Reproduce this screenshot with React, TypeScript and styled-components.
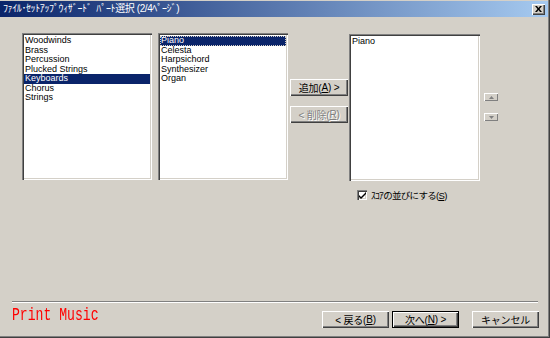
import React from "react";
import styled, { createGlobalStyle } from "styled-components";

const GlobalStyle = createGlobalStyle`
  html, body {
    margin: 0;
    padding: 0;
    background: #d4d0c8;
    overflow: hidden;
  }
`;

const jp = `"Liberation Sans", "Noto Sans CJK JP", sans-serif`;

const families = ["Woodwinds", "Brass", "Percussion", "Plucked Strings", "Keyboards", "Chorus", "Strings"];
const instruments = ["Piano", "Celesta", "Harpsichord", "Synthesizer", "Organ"];

const App = () => {
  return (
    <Window>
      <GlobalStyle />
      <TitleBar>
        <Title>ﾌｧｲﾙ･ｾｯﾄｱｯﾌﾟｳｨｻﾞｰﾄﾞ  ﾊﾟｰﾄ選択 (2/4ﾍﾟｰｼﾞ)</Title>
        <CloseButton>
          <svg width="7" height="6" viewBox="0 0 7 6">
            <path d="M0 0h2l1.5 2L5 0h2L4.5 3 7 6H5L3.5 4 2 6H0l2.5-3z" fill="#000" />
          </svg>
        </CloseButton>
      </TitleBar>

      <Main>
        <ListBox>
          {families.map((f) => (
            <Item key={f} $selected={f === "Keyboards"}>
              {f}
            </Item>
          ))}
        </ListBox>
        <ListBox $ml={6}>
          {instruments.map((f) => (
            <Item key={f} $selected={f === "Piano"} $focus={f === "Piano"}>
              {f}
            </Item>
          ))}
        </ListBox>
        <ButtonColumn>
          <Button>
            追加(<U>A</U>) &gt;
          </Button>
          <Button $disabled>
            &lt; 削除(<U>R</U>)
          </Button>
        </ButtonColumn>
        <RightColumn>
          <ListBox $w={131}>
            <Item>Piano</Item>
          </ListBox>
          <CheckRow>
            <CheckBox>
              <svg width="7" height="7" viewBox="0 0 7 7">
                <path d="M0 3l2 2 5-5v2L2 7 0 5z" fill="#000" />
              </svg>
            </CheckBox>
            <CheckLabel>
              ｽｺｱの並びにする(<U>S</U>)
            </CheckLabel>
          </CheckRow>
        </RightColumn>
        <ArrowColumn>
          <ArrowButton>
            <svg width="5" height="3" viewBox="0 0 5 3">
              <path d="M2.5 0L5 3H0z" fill="#808080" />
            </svg>
          </ArrowButton>
          <ArrowButton>
            <svg width="5" height="3" viewBox="0 0 5 3">
              <path d="M0 0h5L2.5 3z" fill="#808080" />
            </svg>
          </ArrowButton>
        </ArrowColumn>
      </Main>

      <Spacer />
      <Separator />
      <Footer>
        <Logo>Print Music</Logo>
        <ButtonGroup>
          <Button $w={67}>
            &lt; 戻る(<U>B</U>)
          </Button>
          <Button $w={67} $default>
            次へ(<U>N</U>) &gt;
          </Button>
          <Button $w={67} $ml={10}>
            キャンセル
          </Button>
        </ButtonGroup>
      </Footer>
    </Window>
  );
};

export default App;

const Window = styled.div`
  display: flex;
  flex-direction: column;
  width: 550px;
  height: 338px;
  box-sizing: border-box;
  background: #d4d0c8;
  border-right: 1px solid #404040;
  border-bottom: 1px solid #404040;
  box-shadow: inset -1px -1px #808080;
  overflow: hidden;
`;

const TitleBar = styled.div`
  display: flex;
  align-items: center;
  justify-content: space-between;
  height: 16px;
  margin: 1px 1px 0 0;
  padding: 0 3px 0 3px;
  background: linear-gradient(to right, #0a246a, #a6caf0);
`;

const Title = styled.span`
  color: #fff;
  font-family: ${jp};
  font-size: 10px;
  letter-spacing: -0.4px;
  line-height: 16px;
  white-space: pre;
`;

const CloseButton = styled.div`
  display: flex;
  align-items: center;
  justify-content: center;
  width: 13px;
  height: 11px;
  background: #d4d0c8;
  box-shadow: inset 1px 1px #fff, inset -1px -1px #404040, inset -2px -2px #808080;
`;

const Main = styled.div`
  display: flex;
  align-items: flex-start;
  margin-top: 16px;
  padding-left: 22px;
`;

const ListBox = styled.div<{ $w?: number; $ml?: number }>`
  width: ${(p) => p.$w ?? 130}px;
  height: 147px;
  margin-left: ${(p) => p.$ml ?? 0}px;
  box-sizing: border-box;
  padding: 3px 2px;
  background: #fff;
  box-shadow: inset 1px 1px #808080, inset 2px 2px #404040, inset -1px -1px #fff,
    inset -2px -2px #d4d0c8;
`;

const Item = styled.div<{ $selected?: boolean; $focus?: boolean }>`
  height: 9.5px;
  padding-left: 1px;
  font-family: "Liberation Sans", Arial, sans-serif;
  font-size: 9px;
  line-height: 9.5px;
  white-space: nowrap;
  color: ${(p) => (p.$selected ? "#fff" : "#000")};
  background: ${(p) => (p.$selected ? "#0a246a" : "transparent")};
  outline: ${(p) => (p.$focus ? "1px dotted #d4d0c8" : "none")};
  outline-offset: -1px;
`;

const ButtonColumn = styled.div`
  display: flex;
  flex-direction: column;
  gap: 10px;
  margin-left: 2px;
  padding-top: 46px;
`;

const Button = styled.div<{ $w?: number; $ml?: number; $disabled?: boolean; $default?: boolean }>`
  display: flex;
  align-items: center;
  justify-content: center;
  width: ${(p) => p.$w ?? 58}px;
  height: 17px;
  margin-left: ${(p) => p.$ml ?? 0}px;
  box-sizing: border-box;
  font-family: ${jp};
  font-size: 10px;
  letter-spacing: -0.2px;
  white-space: nowrap;
  color: ${(p) => (p.$disabled ? "#808080" : "#000")};
  text-shadow: ${(p) => (p.$disabled ? "1px 1px #fff" : "none")};
  background: #d4d0c8;
  box-shadow: ${(p) =>
    p.$default
      ? "inset 0 0 0 1px #000, inset 1px 1px #000, inset 2px 2px #fff, inset -2px -2px #404040, inset -3px -3px #808080"
      : "inset 1px 1px #fff, inset -1px -1px #404040, inset -2px -2px #808080"};
`;

const U = styled.span`
  text-decoration: underline;
`;

const RightColumn = styled.div`
  display: flex;
  flex-direction: column;
  margin-left: 1px;
  margin-top: 1px;
`;

const CheckRow = styled.div`
  display: flex;
  align-items: center;
  gap: 4px;
  margin-top: 7px;
  padding-left: 8px;
`;

const CheckBox = styled.div`
  display: flex;
  align-items: center;
  justify-content: center;
  width: 10px;
  height: 10px;
  box-sizing: border-box;
  background: #fff;
  box-shadow: inset 1px 1px #808080, inset 2px 2px #404040, inset -1px -1px #fff,
    inset -2px -2px #d4d0c8;
`;

const CheckLabel = styled.span`
  font-family: ${jp};
  font-size: 9.5px;
  letter-spacing: -0.7px;
  color: #000;
`;

const ArrowColumn = styled.div`
  display: flex;
  flex-direction: column;
  gap: 12px;
  margin-left: 4px;
  padding-top: 60px;
`;

const ArrowButton = styled.div`
  display: flex;
  align-items: center;
  justify-content: center;
  width: 14px;
  height: 8px;
  background: #d4d0c8;
  box-shadow: inset 1px 1px #fff, inset -1px -1px #808080;
`;

const Spacer = styled.div`
  flex: 1;
`;

const Separator = styled.div`
  height: 1px;
  margin: 0 11px 0 12px;
  background: #808080;
  border-bottom: 1px solid #fff;
`;

const Footer = styled.div`
  display: flex;
  align-items: flex-start;
  justify-content: space-between;
  height: 32px;
  padding: 2px 10px 0 12px;
`;

const Logo = styled.div`
  font-family: "Liberation Mono", monospace;
  font-size: 19px;
  line-height: 20px;
  color: #ff0000;
  transform: scaleX(0.69);
  transform-origin: left center;
  white-space: nowrap;
`;

const ButtonGroup = styled.div`
  display: flex;
  gap: 3px;
  margin-top: 6px;
`;
